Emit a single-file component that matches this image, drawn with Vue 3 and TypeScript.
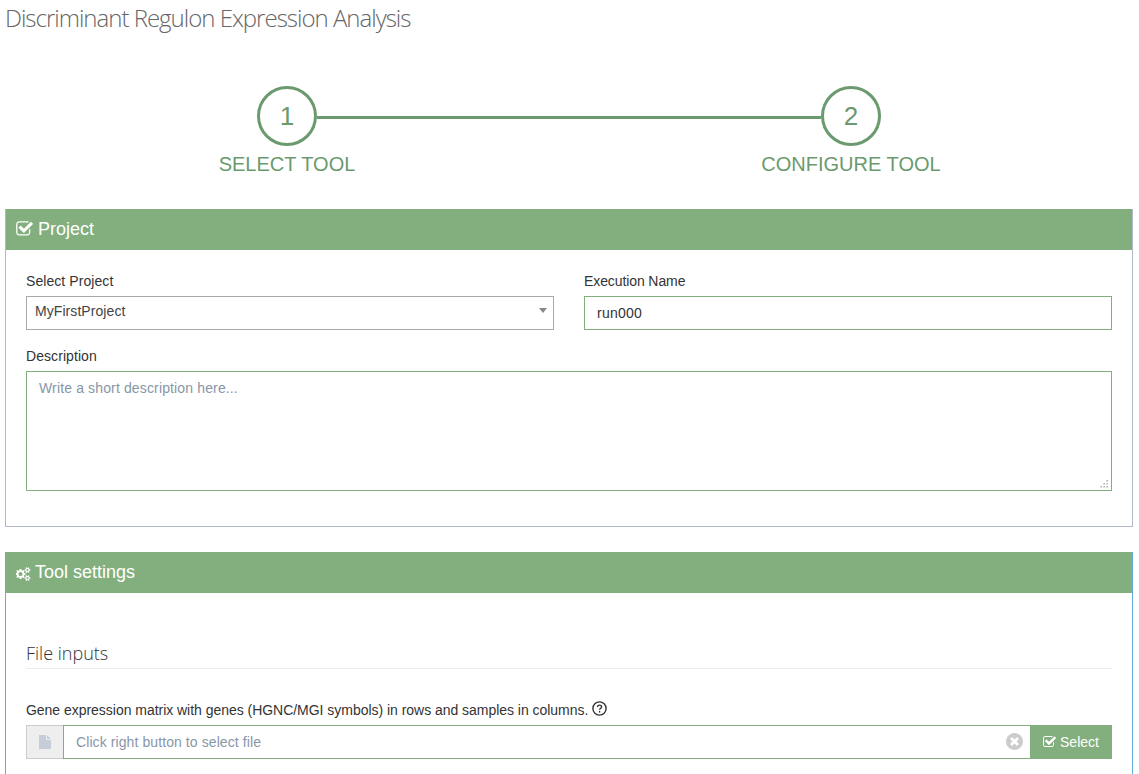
<script setup lang="ts">
import { ref } from 'vue'

interface Step {
  id: number
  label: string
}

const steps: Step[] = [
  { id: 1, label: 'Select tool' },
  { id: 2, label: 'Configure tool' },
]

const project = ref('MyFirstProject')
const executionName = ref('run000')
const description = ref('')
const selectedFile = ref('')

const checkIcon =
  'M1472 930v318q0 119-84.5 203.5t-203.5 84.5h-832q-119 0-203.5-84.5t-84.5-203.5v-832q0-119 84.5-203.5t203.5-84.5h832q63 0 117 25 15 7 18 23 3 17-9 29l-49 49q-10 10-23 10-3 0-9-2-23-6-45-6h-832q-66 0-113 47t-47 113v832q0 66 47 113t113 47h832q66 0 113-47t47-113v-254q0-13 9-22l64-64q10-10 23-10 6 0 12 3 20 8 20 29zm231-489l-814 814q-24 24-57 24t-57-24l-430-430q-24-24-24-57t24-57l110-110q24-24 57-24t57 24l263 263 647-647q24-24 57-24t57 24l110 110q24 24 24 57t-24 57z'
const cogsIcon =
  'M832 896q0-106-75-181t-181-75-181 75-75 181 75 181 181 75 181-75 75-181zm768 512q0-52-38-90t-90-38-90 38-38 90q0 53 37.5 90.5t90.5 37.5 90.5-37.5 37.5-90.5zm0-1024q0-52-38-90t-90-38-90 38-38 90q0 53 37.5 90.5t90.5 37.5 90.5-37.5 37.5-90.5zm-384 421v185q0 10-7 19.5t-16 10.5l-155 24q-11 35-32 76 34 48 90 115 7 11 7 20 0 12-7 19-23 30-82.5 89.5t-78.5 59.5q-11 0-21-7l-115-90q-37 19-77 31-11 108-23 155-7 24-30 24h-186q-11 0-20-7.5t-10-17.5l-23-153q-34-10-75-31l-118 89q-7 7-20 7-11 0-21-8-144-133-144-160 0-9 7-19 10-14 41-53t47-61q-23-44-35-82l-152-24q-10-1-17-9.5t-7-19.5v-185q0-10 7-19.5t16-10.5l155-24q11-35 32-76-34-48-90-115-7-11-7-20 0-12 7-20 22-30 82-89t79-59q11 0 21 7l115 90q34-18 77-32 11-108 23-154 7-24 30-24h186q11 0 20 7.5t10 17.5l23 153q34 10 75 31l118-89q8-7 20-7 11 0 21 8 144 133 144 160 0 8-7 19-12 16-42 54t-45 60q23 48 34 82l152 23q10 2 17 10.5t7 19.5zm640 533v140q0 16-149 31-12 27-30 52 51 113 51 138 0 4-4 7-122 71-124 71-8 0-46-47t-52-68q-20 2-30 2t-30-2q-14 21-52 68t-46 47q-2 0-124-71-4-3-4-7 0-25 51-138-18-25-30-52-149-15-149-31v-140q0-16 149-31 13-29 30-52-51-113-51-138 0-4 4-7 4-2 35-20t59-34 30-16q8 0 46 46.5t52 67.5q20-2 30-2t30 2q51-71 92-112l6-2q4 0 124 70 4 3 4 7 0 25-51 138 17 23 30 52 149 15 149 31zm0-1024v140q0 16-149 31-12 27-30 52 51 113 51 138 0 4-4 7-122 71-124 71-8 0-46-47t-52-68q-20 2-30 2t-30-2q-14 21-52 68t-46 47q-2 0-124-71-4-3-4-7 0-25 51-138-18-25-30-52-149-15-149-31v-140q0-16 149-31 13-29 30-52-51-113-51-138 0-4 4-7 4-2 35-20t59-34 30-16q8 0 46 46.5t52 67.5q20-2 30-2t30 2q51-71 92-112l6-2q4 0 124 70 4 3 4 7 0 25-51 138 17 23 30 52 149 15 149 31z'
const clearIcon =
  'M1277 1122q0-26-19-45l-181-181 181-181q19-19 19-45 0-27-19-46l-90-90q-19-19-46-19-26 0-45 19l-181 181-181-181q-19-19-45-19-27 0-46 19l-90 90q-19 19-19 46 0 26 19 45l181 181-181 181q-19 19-19 45 0 27 19 46l90 90q19 19 46 19 26 0 45-19l181-181 181 181q19 19 45 19 27 0 46-19l90-90q19-19 19-46zm387-226q0 209-103 385.5t-279.5 279.5-385.5 103-385.5-103-279.5-279.5-103-385.5 103-385.5 279.5-279.5 385.5-103 385.5 103 279.5 279.5 103 385.5z'
</script>

<template>
  <main class="page">
    <h1 class="title">Discriminant Regulon Expression Analysis</h1>

    <ol class="steps">
      <li v-for="step in steps" :key="step.id" class="step">
        <div class="track">
          <span class="rail" :class="{ on: step.id > 1 }"></span>
          <span class="circle">{{ step.id }}</span>
          <span class="rail" :class="{ on: step.id < steps.length }"></span>
        </div>
        <span class="step-label">{{ step.label }}</span>
      </li>
    </ol>

    <section class="panel">
      <header class="panel-head">
        <svg class="head-check" viewBox="64 0 1664 1792"><path :d="checkIcon" /></svg>
        <h2>Project</h2>
      </header>
      <div class="panel-body">
        <div class="columns">
          <div class="field">
            <label>Select Project</label>
            <div class="select">
              <span>{{ project }}</span>
              <svg class="caret" viewBox="0 0 8 5"><path d="M0 0h8L4 5z" /></svg>
            </div>
          </div>
          <div class="field">
            <label for="execution" class="execution-label">Execution Name</label>
            <input id="execution" v-model="executionName" class="control execution" type="text" />
          </div>
        </div>
        <div class="field description">
          <label for="description">Description</label>
          <div class="area">
            <textarea
              id="description"
              v-model="description"
              class="control"
              placeholder="Write a short description here..."
            ></textarea>
            <svg class="grip" viewBox="0 0 8 8" shape-rendering="crispEdges">
              <path class="grip-light" d="M6 0h2v2h-2zM3 3h2v2h-2zM6 3h2v2h-2zM0 6h2v2h-2zM3 6h2v2h-2zM6 6h2v2h-2z" />
              <path d="M7 0h1v1h-1zM4 3h1v1h-1zM7 3h1v1h-1zM1 6h1v1h-1zM4 6h1v1h-1zM7 6h1v1h-1z" />
            </svg>
          </div>
        </div>
      </div>
    </section>

    <section class="panel settings">
      <header class="panel-head">
        <svg class="head-cogs" viewBox="0 0 1920 1792"><path :d="cogsIcon" /></svg>
        <h2>Tool settings</h2>
      </header>
      <div class="panel-body">
        <h3 class="group-title">File inputs</h3>
        <div class="file-label">
          <label for="file">Gene expression matrix with genes (HGNC/MGI symbols) in rows and samples in columns.</label>
          <svg class="help" viewBox="0 0 15 15">
            <circle cx="7.5" cy="7.5" r="6.6" />
            <path d="M5.5 6.1C5.5 3.5 9.6 3.5 9.6 5.9C9.6 7.3 7.6 7.2 7.6 8.8" />
            <path d="M7.6 9.9v1.7" />
          </svg>
        </div>
        <div class="file-row">
          <span class="addon">
            <svg viewBox="0 0 12 14"><path d="M0 0h7v5h5v9H0zM8 0l4 4H8z" /></svg>
          </span>
          <div class="file-input">
            <input
              id="file"
              v-model="selectedFile"
              class="control"
              type="text"
              placeholder="Click right button to select file"
            />
            <svg class="clear" viewBox="128 128 1536 1536"><path :d="clearIcon" /></svg>
          </div>
          <button class="pick" type="button">
            <svg viewBox="64 0 1664 1792"><path :d="checkIcon" /></svg>
            <span>Select</span>
          </button>
        </div>
      </div>
    </section>
  </main>
</template>

<style>
html,
body {
  margin: 0;
  background: #fff;
  overflow: hidden;
}
</style>

<style scoped>
.page {
  box-sizing: border-box;
  height: 774px;
  overflow: hidden;
  padding: 0 6px 0 5px;
  background: #fff;
  color: #333;
  font: 14px/20px 'Liberation Sans', Arial, sans-serif;
}
.page * {
  box-sizing: border-box;
}
.title {
  margin: 0;
  height: 86px;
  padding-top: 1px;
  color: #666;
  font: 300 24px/33px 'Open Sans', sans-serif;
  letter-spacing: -1px;
}
.steps {
  display: flex;
  height: 123px;
  margin: 0;
  padding: 0;
  list-style: none;
  color: #6a9a6e;
}
.step {
  flex: 1;
  text-align: center;
}
.track {
  display: flex;
  align-items: center;
}
.rail {
  flex: 1;
  height: 3px;
  margin-top: 3px;
}
.rail.on {
  background: #6a9a6e;
}
.circle {
  width: 60px;
  height: 60px;
  border: 3px solid #6a9a6e;
  border-radius: 50%;
  font-size: 26px;
  line-height: 54px;
}
.step-label {
  display: block;
  margin-top: 4px;
  font-size: 20px;
  line-height: 28px;
  text-transform: uppercase;
}
.panel {
  height: 318px;
  border: 1px solid #b1b8cb;
  border-top: 0;
}
.settings {
  height: 300px;
  margin-top: 25px;
  border-color: #5fadd9;
}
.panel-head {
  display: flex;
  align-items: center;
  height: 41px;
  padding-left: 10px;
  background: #82af7d;
  color: #fff;
}
.panel-head h2 {
  margin: 0;
  padding-bottom: 1px;
  font-size: 18px;
  font-weight: 400;
  line-height: 20px;
}
svg {
  display: block;
  fill: currentColor;
}
.head-check {
  width: 17px;
  height: 18px;
  margin: -2px 5px 0 0;
}
.head-cogs {
  width: 15px;
  height: 14px;
  margin: 3px 4px 0 0;
}
.panel-body {
  padding: 21px 20px 0;
}
.columns {
  display: grid;
  grid-template-columns: 1fr 1fr;
  gap: 30px;
}
label {
  display: block;
}
.field label {
  margin-bottom: 5px;
  letter-spacing: 0.07px;
}
.field .execution-label {
  letter-spacing: -0.1px;
}
.description {
  margin-top: 16px;
}
.select {
  display: flex;
  justify-content: space-between;
  height: 34px;
  padding: 4px 6px 0 8px;
  border: 1px solid #aaa;
  color: #444;
  letter-spacing: 0.07px;
}
.caret {
  width: 8px;
  height: 5px;
  margin-top: 7px;
  color: #888;
}
.control {
  display: block;
  width: 100%;
  height: 34px;
  margin: 0;
  padding: 6px 12px;
  border: 1px solid #82af7d;
  border-radius: 0;
  outline: 0;
  background: #fff;
  color: #333;
  font: inherit;
  letter-spacing: 0.09px;
  resize: none;
}
.execution {
  letter-spacing: 0.25px;
}
.control::placeholder {
  color: #8896a8;
  opacity: 1;
}
.area,
.file-input {
  position: relative;
}
textarea.control {
  height: 120px;
  letter-spacing: 0.14px;
}
.grip {
  position: absolute;
  right: 4px;
  bottom: 3px;
  width: 8px;
  height: 8px;
  color: #b0b0b0;
}
.grip-light {
  fill: #dcdcdc;
}
.group-title {
  margin: 29px 0 31px;
  height: 26px;
  border-bottom: 1px solid #e7ecf1;
  font: 300 18px/21px 'Open Sans', sans-serif;
}
.file-label {
  display: flex;
  align-items: center;
  height: 20px;
  margin-bottom: 5px;
}
.file-label label {
  letter-spacing: -0.03px;
}
.help {
  width: 15px;
  height: 15px;
  margin: -3px 0 0 4px;
  fill: none;
  stroke: #333;
  stroke-width: 1.4;
}
.file-row {
  display: flex;
}
.addon {
  display: flex;
  align-items: center;
  justify-content: center;
  width: 37px;
  height: 34px;
  border: 1px solid #ccc;
  border-right: 0;
  background: #eee;
  color: #c5cddb;
}
.addon svg {
  width: 12px;
  height: 14px;
}
.file-input {
  flex: 1;
}
.file-input .control {
  border-right: 0;
}
.clear {
  position: absolute;
  top: 8px;
  right: 7px;
  width: 17px;
  height: 17px;
  color: #ccc;
}
.pick {
  display: flex;
  align-items: center;
  justify-content: center;
  gap: 4px;
  width: 82px;
  height: 34px;
  padding: 0;
  border: 0;
  background: #82af7d;
  color: #fff;
  font: inherit;
}
.pick svg {
  width: 13px;
  height: 14px;
}
</style>
